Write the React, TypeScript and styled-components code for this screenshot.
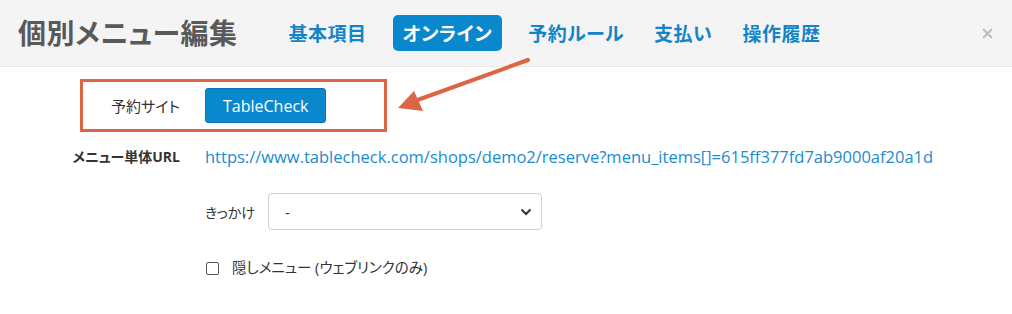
import React from 'react';
import styled, { createGlobalStyle } from 'styled-components';

const GlobalStyle = createGlobalStyle`
  html, body {
    margin: 0;
    padding: 0;
    background: #ffffff;
  }
  body {
    font-family: "Open Sans", "Noto Sans CJK JP", sans-serif;
    color: #333333;
  }
`;

const Page = styled.div`
  position: relative;
  width: 1012px;
  height: 314px;
  overflow: hidden;
  background: #ffffff;
`;

const Header = styled.div`
  display: flex;
  align-items: center;
  height: 66px;
  padding: 0 19px 0 18px;
  background: #f4f4f4;
  border-bottom: 1px solid #e6e6e6;
  font-feature-settings: "palt";
`;

const Title = styled.h1`
  margin: 0 47px 0 0;
  font-size: 28px;
  font-weight: 700;
  color: #595959;
  letter-spacing: 0.5px;
  line-height: 1;
`;

const Tabs = styled.nav`
  display: flex;
  align-items: center;
  gap: 22px;
`;

const Tab = styled.a<{ $active?: boolean }>`
  display: inline-flex;
  align-items: center;
  height: 36px;
  padding: 0 ${({ $active }) => ($active ? '10px' : '4px')};
  border-radius: 5px;
  font-size: 19px;
  font-weight: 700;
  letter-spacing: 0.5px;
  text-decoration: none;
  color: ${({ $active }) => ($active ? '#ffffff' : '#1285c8')};
  background: ${({ $active }) => ($active ? '#0a88ce' : 'transparent')};
`;

const Close = styled.button`
  margin-left: auto;
  padding: 0;
  border: none;
  background: transparent;
  display: flex;
`;

const Body = styled.div`
  padding: 12px 0 0 70px;
  display: flex;
  flex-direction: column;
  font-feature-settings: "palt";
`;

const Highlight = styled.div`
  display: flex;
  align-items: center;
  gap: 25px;
  width: 301px;
  margin-left: 10px;
  padding: 6px 0;
  border: 3px solid #dc6546;
`;

const Label = styled.div<{ $width: number; $bold?: boolean }>`
  width: ${({ $width }) => $width}px;
  text-align: right;
  white-space: nowrap;
  font-size: ${({ $bold }) => ($bold ? '14px' : '15px')};
  font-weight: ${({ $bold }) => ($bold ? 700 : 400)};
  color: #333333;
  flex-shrink: 0;
`;

const SiteButton = styled.button`
  height: 35px;
  padding: 0 17px;
  border: 1px solid #0a74b4;
  border-radius: 3px;
  background: #0a88ce;
  color: #ffffff;
  font-family: "Open Sans", "Noto Sans CJK JP", sans-serif;
  font-size: 16px;
`;

const Row = styled.div`
  display: flex;
  align-items: center;
  gap: 25px;
  margin-top: 13px;
  line-height: 24px;
`;

const UrlLink = styled.a`
  font-size: 16.5px;
  color: #1a8bd0;
  text-decoration: none;
  white-space: nowrap;
`;

const Field = styled.div`
  display: flex;
  align-items: center;
  gap: 13px;
  margin: 24px 0 0 135px;
`;

const FieldLabel = styled.span`
  font-size: 14px;
  color: #333333;
`;

const Select = styled.div`
  display: flex;
  align-items: center;
  justify-content: space-between;
  box-sizing: border-box;
  width: 274px;
  height: 37px;
  padding: 0 9px 0 16px;
  border: 1px solid #cfcfcf;
  border-radius: 4px;
  font-size: 15px;
  color: #333333;
`;

const CheckRow = styled.label`
  display: flex;
  align-items: center;
  gap: 13px;
  margin: 26px 0 0 136px;
  font-size: 14.5px;
  color: #333333;
  line-height: 24px;
`;

const Box = styled.span`
  width: 11px;
  height: 11px;
  border: 1px solid #555555;
  border-radius: 2px;
  background: #ffffff;
`;

const Overlay = styled.svg`
  position: absolute;
  top: 0;
  left: 0;
  pointer-events: none;
`;

const tabs = ['基本項目', 'オンライン', '予約ルール', '支払い', '操作履歴'];

export default function App() {
  return (
    <Page>
      <GlobalStyle />
      <Header>
        <Title>個別メニュー編集</Title>
        <Tabs>
          {tabs.map((t) => (
            <Tab key={t} $active={t === 'オンライン'}>
              {t}
            </Tab>
          ))}
        </Tabs>
        <Close aria-label="close">
          <svg width="11" height="11" viewBox="0 0 11 11">
            <path d="M1 1L10 10M10 1L1 10" stroke="#bdbdbd" strokeWidth="2" />
          </svg>
        </Close>
      </Header>
      <Body>
        <Highlight>
          <Label $width={97}>予約サイト</Label>
          <SiteButton>TableCheck</SiteButton>
        </Highlight>
        <Row>
          <Label $width={110} $bold>
            メニュー単体URL
          </Label>
          <UrlLink>https://www.tablecheck.com/shops/demo2/reserve?menu_items[]=615ff377fd7ab9000af20a1d</UrlLink>
        </Row>
        <Field>
          <FieldLabel>きっかけ</FieldLabel>
          <Select>
            <span>-</span>
            <svg width="12" height="8" viewBox="0 0 12 8">
              <path d="M1.5 1.5L6 6L10.5 1.5" fill="none" stroke="#333" strokeWidth="2" />
            </svg>
          </Select>
        </Field>
        <CheckRow>
          <Box />
          隠しメニュー (ウェブリンクのみ)
        </CheckRow>
      </Body>
      <Overlay width="1012" height="314" viewBox="0 0 1012 314">
        <line x1="528" y1="60" x2="412" y2="102" stroke="#dc6546" strokeWidth="4" strokeLinecap="round" />
        <polygon points="398,108 414,91 423,111" fill="#dc6546" />
      </Overlay>
    </Page>
  );
}
